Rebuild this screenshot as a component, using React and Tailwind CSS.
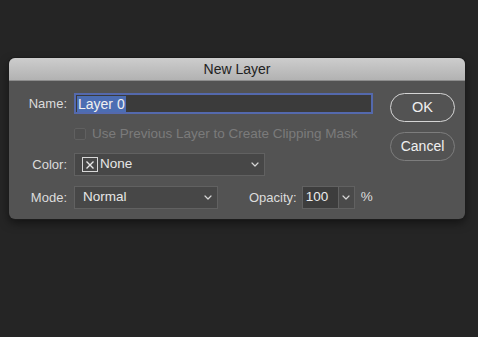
const font = { fontFamily: '"Liberation Sans", Arial, sans-serif' }

function Chevron({ className = '' }) {
  return (
    <svg width="8" height="5" viewBox="0 0 8 5" className={className}>
      <path d="M1 1l3 3 3-3" fill="none" stroke="#d6d6d6" strokeWidth="1.2" strokeLinecap="round" strokeLinejoin="round" />
    </svg>
  )
}

function Label({ children }) {
  return <div className="w-[59px] pr-[1px] text-right text-[13px] text-[#dcdcdc]">{children}</div>
}

export default function App() {
  return (
    <div className="w-[478px] h-[337px] bg-[#252525] pt-[58px] pl-[9px]" style={font}>
      <div className="w-[456px] h-[161px] rounded-[6px] bg-[#535353] overflow-hidden shadow-[0_0_0_1px_#1c1c1c,0_4px_10px_rgba(0,0,0,0.5)]">
        {/* title bar */}
        <div className="h-[23px] flex items-center justify-center bg-gradient-to-b from-[#cdcdcd] to-[#b2b2b2] border-b border-[#8d8d8d] text-[14px] text-[#222]">
          New Layer
        </div>

        <div className="flex">
          <div className="w-[381px]">
            {/* Name */}
            <div className="mt-[12px] flex items-center gap-[6px] h-[21px]">
              <Label>Name:</Label>
              <div className="w-[299px] h-[21px] border-2 border-[#5469ad] bg-[#3b3b3b] flex items-center pl-[1px]">
                <span className="bg-[#4c6db3] text-[#f0f0f0] text-[14px] leading-[16px] px-[1px]">Layer 0</span>
              </div>
            </div>

            {/* Clipping mask */}
            <div className="mt-[14px] flex items-center h-[12px] pl-[65px] gap-[6px]">
              <div className="w-[12px] h-[12px] rounded-[2px] border border-[#606060] bg-[#4f4f4f]" />
              <span className="text-[13.5px] text-[#7b7b7b]">Use Previous Layer to Create Clipping Mask</span>
            </div>

            {/* Color */}
            <div className="mt-[13px] flex items-center gap-[6px] h-[23px]">
              <Label>Color:</Label>
              <div className="w-[191px] h-[23px] border border-[#616161] bg-[#474747] flex items-center pl-[7px] pr-[4px]">
                <div className="w-[16px] h-[15px] border border-[#d8d8d8] flex items-center justify-center">
                  <svg width="10" height="10" viewBox="0 0 10 10">
                    <path d="M1.5 1.5l7 7M8.5 1.5l-7 7" stroke="#e6e6e6" strokeWidth="1.4" />
                  </svg>
                </div>
                <span className="ml-[2px] text-[13.5px] text-[#e6e6e6]">None</span>
                <Chevron className="ml-auto mr-[1px]" />
              </div>
            </div>

            {/* Mode / Opacity */}
            <div className="mt-[10px] flex items-center h-[23px]">
              <Label>Mode:</Label>
              <div className="ml-[6px] w-[144px] h-[23px] border border-[#616161] bg-[#474747] flex items-center pl-[8px] pr-[4px]">
                <span className="text-[13.5px] text-[#e6e6e6]">Normal</span>
                <Chevron className="ml-auto mr-[1px]" />
              </div>
              <span className="ml-[31px] text-[13px] text-[#dcdcdc]">Opacity:</span>
              <div className="ml-[5px] flex h-[23px] border border-[#616161] -mt-[1px]">
                <div className="w-[35px] bg-[#3d3d3d] flex items-center pl-[3px] text-[13.5px] text-[#ececec]">100</div>
                <div className="w-[16px] bg-[#4a4a4a] border-l border-[#616161] flex items-center justify-center">
                  <Chevron />
                </div>
              </div>
              <span className="ml-[6px] text-[13.5px] text-[#dcdcdc]">%</span>
            </div>
          </div>

          {/* Buttons */}
          <div className="flex flex-col pt-[12px] gap-[10px]">
            <button className="w-[65px] h-[29px] rounded-full border-[1.5px] border-[#d4d4d4] text-[14.5px] text-[#efefef] bg-transparent">
              OK
            </button>
            <button className="w-[65px] h-[29px] rounded-full border border-[#7d7d7d] text-[14px] text-[#efefef] bg-transparent">
              Cancel
            </button>
          </div>
        </div>
      </div>
    </div>
  )
}
